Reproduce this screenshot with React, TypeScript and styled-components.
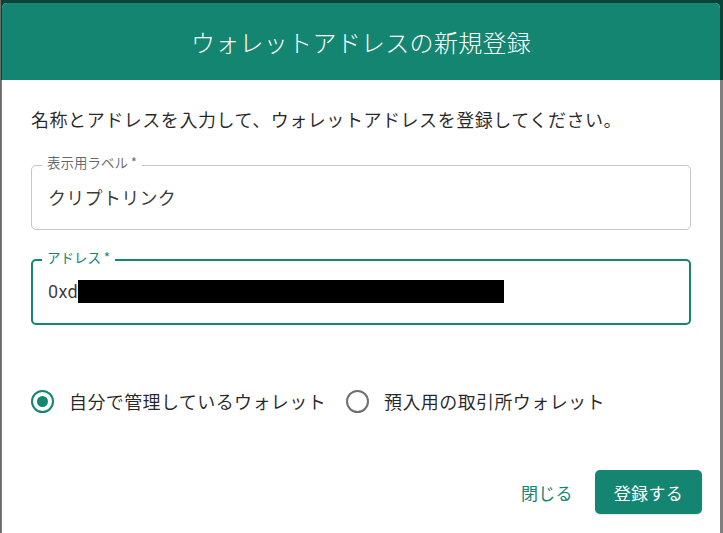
import React from "react";
import styled, { createGlobalStyle } from "styled-components";

const GREEN = "#138570";
const FONT = `"Noto Sans CJK JP", "Noto Sans", Roboto, sans-serif`;

const Global = createGlobalStyle`
  html, body { margin: 0; padding: 0; }
  body {
    width: 723px;
    height: 533px;
    overflow: hidden;
    font-family: ${FONT};
    background: #7f7f7f;
  }
  * { box-sizing: border-box; }
`;

const Backdrop = styled.div`
  width: 723px;
  height: 533px;
  padding: 3px 3px 0 1px;
  background: linear-gradient(#0b4237 0, #0b4237 80px, #7f7f7f 80px);
  border-left: 1px solid #6c6c6c;
  display: flex;
  overflow: hidden;
`;

const Dialog = styled.div`
  flex: 1;
  height: 560px;
  background: #ffffff;
  border-radius: 5px;
  overflow: hidden;
  display: flex;
  flex-direction: column;
`;

const Header = styled.header`
  height: 77px;
  background: ${GREEN};
  display: flex;
  align-items: center;
  justify-content: center;
`;

const Title = styled.h2`
  margin: 0;
  color: #ffffff;
  font-size: 24px;
  font-weight: 300;
  line-height: 1;
  letter-spacing: 0.3px;
`;

const Content = styled.div`
  padding: 26px 29px 0 29px;
  display: flex;
  flex-direction: column;
`;

const Lead = styled.p`
  margin: 0;
  font-size: 18px;
  line-height: 27px;
  color: rgba(0, 0, 0, 0.85);
  letter-spacing: 0.55px;
`;

const Fieldset = styled.fieldset<{ $focused?: boolean; $top: number }>`
  display: block;
  margin: ${(p) => p.$top}px 0 0 0;
  padding: 0 16px;
  min-width: 0;
  border-radius: 5px;
  border: ${(p) => (p.$focused ? `2px solid ${GREEN}` : "1px solid #c6c6c6")};
  height: 75px;
`;

const Legend = styled.legend<{ $focused?: boolean }>`
  margin-left: ${(p) => (p.$focused ? -7 : -6)}px;
  padding: 0 5px 6px 5px;
  font-size: 13.5px;
  line-height: 14px;
  color: ${(p) => (p.$focused ? GREEN : "rgba(0,0,0,0.6)")};
`;

const Value = styled.div<{ $focused?: boolean }>`
  display: flex;
  align-items: center;
  height: 24px;
  margin-top: ${(p) => (p.$focused ? 9 : 10)}px;
  margin-left: ${(p) => (p.$focused ? -1 : 0)}px;
  font-size: 18px;
  color: rgba(0, 0, 0, 0.78);
  font-family: Roboto, ${FONT};
  letter-spacing: 0.3px;
`;

const Redaction = styled.span`
  display: inline-block;
  width: 426px;
  height: 23px;
  background: #000;
`;

const RadioRow = styled.div`
  margin-top: 55px;
  height: 42px;
  display: flex;
  align-items: center;
  gap: 20px;
`;

const RadioLabel = styled.label`
  display: flex;
  align-items: center;
  gap: 15px;
  font-size: 18px;
  letter-spacing: 0.4px;
  color: rgba(0, 0, 0, 0.85);
  cursor: pointer;
`;

const RadioCircle = styled.span<{ $checked?: boolean }>`
  width: 23px;
  height: 23px;
  border-radius: 50%;
  border: 2.3px solid ${(p) => (p.$checked ? GREEN : "#6f6f6f")};
  display: flex;
  align-items: center;
  justify-content: center;
  &::after {
    content: "";
    width: 11px;
    height: 11px;
    border-radius: 50%;
    background: ${(p) => (p.$checked ? GREEN : "transparent")};
  }
`;

const Actions = styled.div`
  margin-top: 48px;
  padding-right: 18px;
  display: flex;
  justify-content: flex-end;
  align-items: center;
  gap: 11px;
`;

const Button = styled.button<{ $variant: "text" | "contained" }>`
  height: 44px;
  padding: 0 ${(p) => (p.$variant === "contained" ? 19 : 11)}px;
  border: none;
  border-radius: 5px;
  font-family: ${FONT};
  font-size: 17px;
  letter-spacing: 0.3px;
  cursor: pointer;
  background: ${(p) => (p.$variant === "contained" ? GREEN : "transparent")};
  color: ${(p) => (p.$variant === "contained" ? "#ffffff" : GREEN)};
  box-shadow: ${(p) =>
    p.$variant === "contained" ? "0 1px 2px rgba(0,0,0,0.12)" : "none"};
`;

export default function App() {
  return (
    <>
      <Global />
      <Backdrop>
        <Dialog>
          <Header>
            <Title>ウォレットアドレスの新規登録</Title>
          </Header>
          <Content>
            <Lead>名称とアドレスを入力して、ウォレットアドレスを登録してください。</Lead>
            <Fieldset $top={22}>
              <Legend>表示用ラベル{"\u2009"}*</Legend>
              <Value>クリプトリンク</Value>
            </Fieldset>
            <Fieldset $top={20} $focused>
              <Legend $focused>アドレス{"\u2009"}*</Legend>
              <Value $focused>
                0xd
                <Redaction />
              </Value>
            </Fieldset>
            <RadioRow>
              <RadioLabel>
                <RadioCircle $checked />
                自分で管理しているウォレット
              </RadioLabel>
              <RadioLabel>
                <RadioCircle />
                預入用の取引所ウォレット
              </RadioLabel>
            </RadioRow>
          </Content>
          <Actions>
            <Button $variant="text">閉じる</Button>
            <Button $variant="contained">登録する</Button>
          </Actions>
        </Dialog>
      </Backdrop>
    </>
  );
}
